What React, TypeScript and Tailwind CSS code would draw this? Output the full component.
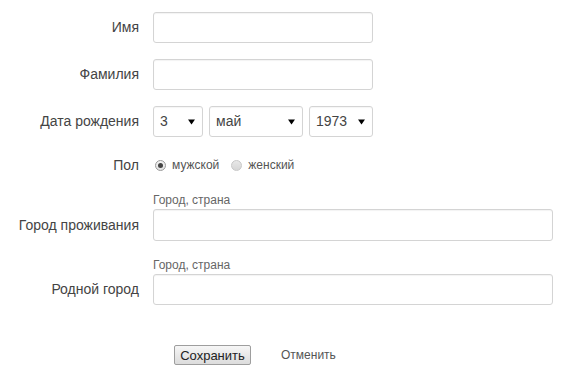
function Caret() {
  return (
    <svg width="7" height="6" viewBox="0 0 7 6" className="shrink-0">
      <path d="M0 0.5 L7 0.5 L3.5 5.5 Z" fill="#000" />
    </svg>
  );
}

function Select({ value, width }: { value: string; width: string }) {
  return (
    <div
      className={`${width} h-[31px] flex items-center justify-between pl-[6px] pr-[7px] border border-[#d4d4d4] rounded-[3px] bg-white shadow-[inset_0_1px_1px_rgba(0,0,0,0.04)] text-[#444]`}
    >
      <span>{value}</span>
      <Caret />
    </div>
  );
}

function Radio({ checked, label }: { checked?: boolean; label: string }) {
  return (
    <label className="flex items-center gap-[6px] text-[12px] text-[#555]">
      <span
        className={`w-[11px] h-[11px] rounded-full border flex items-center justify-center ${
          checked
            ? "border-[#9a9a9a] bg-gradient-to-b from-[#f4f4f4] to-[#e2e2e2]"
            : "border-[#c8c8c8] bg-gradient-to-b from-[#e8e8e8] to-[#d6d6d6]"
        }`}
      >
        {checked && <span className="w-[5px] h-[5px] rounded-full bg-[#444]" />}
      </span>
      {label}
    </label>
  );
}

const input =
  "h-[31px] border border-[#d4d4d4] rounded-[3px] bg-white shadow-[inset_0_1px_1px_rgba(0,0,0,0.05)]";

export default function App() {
  return (
    <div className="bg-white w-[585px] h-[376px] text-[14px] text-[#444]" style={{ fontFamily: '"Liberation Sans", Arial, sans-serif' }}>
      <div className="pt-[12px] flex flex-col">
        <div className="flex items-center">
          <div className="w-[140px] text-right pr-[1px]">Имя</div>
          <div className={`${input} ml-[13px] w-[220px]`} />
        </div>
        <div className="flex items-center mt-[16px]">
          <div className="w-[140px] text-right pr-[1px]">Фамилия</div>
          <div className={`${input} ml-[13px] w-[220px]`} />
        </div>
        <div className="flex items-center mt-[16px]">
          <div className="w-[140px] text-right pr-[1px]">Дата рождения</div>
          <div className="ml-[13px] flex gap-[6px]">
            <Select value="3" width="w-[50px]" />
            <Select value="май" width="w-[94px]" />
            <Select value="1973" width="w-[64px]" />
          </div>
        </div>
        <div className="flex items-center mt-[18px] h-[20px]">
          <div className="w-[140px] text-right pr-[1px]">Пол</div>
          <div className="ml-[15px] flex items-center gap-[12px]">
            <Radio checked label="мужской" />
            <Radio label="женский" />
          </div>
        </div>
        <div className="flex items-end mt-[18px]">
          <div className="w-[140px] text-right pr-[1px] h-[31px] leading-[31px]">Город проживания</div>
          <div className="ml-[13px] flex flex-col">
            <div className="text-[12px] text-[#666] leading-[14px] mb-[2px]">Город, страна</div>
            <div className={`${input} w-[400px] h-[32px]`} />
          </div>
        </div>
        <div className="flex items-end mt-[17px]">
          <div className="w-[140px] text-right pr-[1px] h-[31px] leading-[31px]">Родной город</div>
          <div className="ml-[13px] flex flex-col">
            <div className="text-[12px] text-[#666] leading-[14px] mb-[2px]">Город, страна</div>
            <div className={`${input} w-[400px]`} />
          </div>
        </div>
        <div className="flex items-center mt-[40px] pl-[174px] gap-[30px]">
          <button className="h-[20px] w-[77px] border border-[#9e9e9e] rounded-[2px] bg-gradient-to-b from-[#f6f6f6] to-[#dcdcdc] text-[13px] text-[#222]">
            Сохранить
          </button>
          <span className="text-[12px] text-[#555]">Отменить</span>
        </div>
      </div>
    </div>
  );
}
